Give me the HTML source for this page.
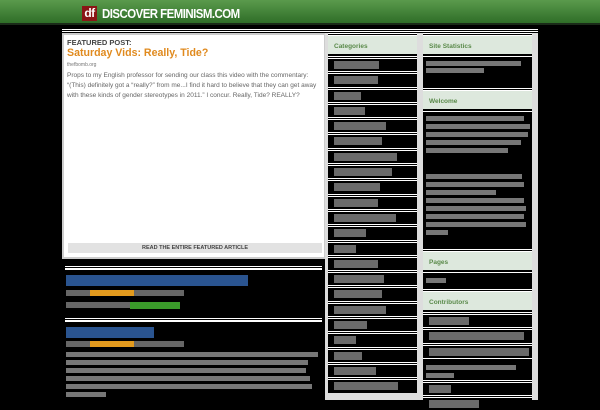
<!DOCTYPE html>
<html><head><meta charset="utf-8"><style>
*{margin:0;padding:0;box-sizing:border-box}
body{width:600px;height:400px;overflow:hidden;background:#000;font-family:"Liberation Sans",sans-serif;position:relative}
.hdr{position:absolute;left:0;top:0;width:600px;height:25px;background:linear-gradient(#5a9a4c,#2f6e28);border-bottom:2px solid #1a2a18}
.logo{position:absolute;left:82px;top:6px;width:15px;height:15px;background:#8a1616;color:#fff;font-weight:bold;font-size:12px;line-height:14px;text-align:center;letter-spacing:-0.5px}
.site{position:absolute;left:102px;top:6px;color:#fff;font-weight:bold;font-size:13px;letter-spacing:-0.6px;transform:scaleX(0.88);transform-origin:left}
.tl{position:absolute;left:62px;top:28px;width:476px;height:5px;background:linear-gradient(#000 0,#000 1px,#fff 1px,#fff 2px,#000 2px,#000 3px,#fff 3px,#fff 4px,#000 4px)}
.feat{position:absolute;left:62px;top:33px;width:264px;height:226px;background:#fff;border:2px solid #ccc}
.feat .fp{position:absolute;left:3px;top:3px;font-size:7.5px;font-weight:bold;color:#444}
.feat h1{position:absolute;left:3px;top:12px;font-size:10.6px;color:#e08a1e;font-weight:bold;white-space:nowrap}
.feat .src{position:absolute;left:3px;top:27px;font-size:5px;color:#777}
.feat p{position:absolute;left:3px;top:36px;width:254px;font-size:6.5px;line-height:10px;color:#666}
.feat .rd{position:absolute;left:4px;top:208px;width:254px;height:10px;background:#e2e2e2;font-size:5.5px;color:#444;text-align:center;line-height:10px;font-weight:bold}
.sep{position:absolute;left:65px;width:257px;height:5px;background:linear-gradient(#fff 0,#fff 1px,#000 1px,#000 2px,#fff 2px,#fff 4px,#000 4px)}
.blk{position:absolute;height:8px}
.side{position:absolute;left:325px;top:33px;width:213px;height:367px;background:#ddd}
.col{position:absolute;top:0}
.h{height:23px;background:linear-gradient(#fff 0,#fff 1px,#000 1px,#000 2px,#fff 2px,#fff 3px,#dde8dd 3px);color:#5a8a4a;font-size:6.5px;font-weight:bold;padding:10px 0 0 6px;border-bottom:2px solid #000;}
.it{height:15.3px;background:linear-gradient(#fff 0,#fff 1px,#000 1px,#000 2px,#fff 2px,#fff 3px,#000 3px);position:relative}
.it i{position:absolute;left:6px;top:5px;height:8px;background:#777;opacity:.9}
.box{background:#000;position:relative;border-top:1px solid #fff}
.box i{position:absolute;left:3px;height:5px;background:#777}
</style></head><body>
<div class="hdr"><div class="logo">df</div><div class="site">DISCOVER FEMINISM.COM</div></div>
<div class="tl"></div>
<div class="feat">
<div class="fp">FEATURED POST:</div>
<h1>Saturday Vids: Really, Tide?</h1>
<div class="src">thefbomb.org</div>
<p>Props to my English professor for sending our class this video with the commentary: “(This) definitely got a “really?” from me...I find it hard to believe that they can get away with these kinds of gender stereotypes in 2011.” I concur. Really, Tide? REALLY?</p>
<div class="rd">READ THE ENTIRE FEATURED ARTICLE</div>
</div>
<div class="sep" style="top:266px"></div>
<div class="blk" style="left:66px;top:275px;width:182px;height:11px;background:#2a5490"></div>
<div class="blk" style="left:66px;top:290px;width:118px;height:6px;background:#666"></div>
<div class="blk" style="left:90px;top:290px;width:44px;height:6px;background:#e29a1e"></div>
<div class="blk" style="left:66px;top:302px;width:64px;height:6px;background:#666"></div>
<div class="blk" style="left:130px;top:302px;width:50px;height:7px;background:#3a9a2a"></div>
<div class="sep" style="top:318px"></div>
<div class="blk" style="left:66px;top:327px;width:88px;height:11px;background:#2a5490"></div>
<div class="blk" style="left:66px;top:341px;width:118px;height:6px;background:#666"></div>
<div class="blk" style="left:90px;top:341px;width:44px;height:6px;background:#e29a1e"></div>
<div class="blk" style="left:66px;top:352px;width:252px;height:5px;background:#777"></div>
<div class="blk" style="left:66px;top:360px;width:242px;height:5px;background:#777"></div>
<div class="blk" style="left:66px;top:368px;width:240px;height:5px;background:#777"></div>
<div class="blk" style="left:66px;top:376px;width:244px;height:5px;background:#777"></div>
<div class="blk" style="left:66px;top:384px;width:246px;height:5px;background:#777"></div>
<div class="blk" style="left:66px;top:392px;width:40px;height:5px;background:#777"></div>
<div class="side">
<div class="col" style="left:3px;width:89px">
<div class="h">Categories</div>
<div class="it"><i style="width:45px"></i></div><div class="it"><i style="width:44px"></i></div><div class="it"><i style="width:27px"></i></div><div class="it"><i style="width:31px"></i></div><div class="it"><i style="width:52px"></i></div><div class="it"><i style="width:48px"></i></div><div class="it"><i style="width:63px"></i></div><div class="it"><i style="width:58px"></i></div><div class="it"><i style="width:46px"></i></div><div class="it"><i style="width:44px"></i></div><div class="it"><i style="width:62px"></i></div><div class="it"><i style="width:32px"></i></div><div class="it"><i style="width:22px"></i></div><div class="it"><i style="width:44px"></i></div><div class="it"><i style="width:50px"></i></div><div class="it"><i style="width:48px"></i></div><div class="it"><i style="width:52px"></i></div><div class="it"><i style="width:33px"></i></div><div class="it"><i style="width:22px"></i></div><div class="it"><i style="width:28px"></i></div><div class="it"><i style="width:42px"></i></div><div class="it"><i style="width:64px"></i></div>
</div>
<div class="col" style="left:98px;width:109px">
<div class="h">Site Statistics</div>
<div class="box" style="height:32px"><i style="top:4px;width:95px"></i><i style="top:11px;width:58px"></i></div>
<div class="h">Welcome</div>
<div class="box" style="height:138px"><i style="top:4px;width:98px"></i><i style="top:12px;width:104px"></i><i style="top:20px;width:102px"></i><i style="top:28px;width:95px"></i><i style="top:36px;width:82px"></i><i style="top:62px;width:96px"></i><i style="top:70px;width:98px"></i><i style="top:78px;width:70px"></i><i style="top:86px;width:98px"></i><i style="top:94px;width:100px"></i><i style="top:102px;width:98px"></i><i style="top:110px;width:100px"></i><i style="top:118px;width:22px"></i></div>
<div class="h">Pages</div>
<div class="box" style="height:17px"><i style="top:5px;width:20px"></i></div>
<div class="h">Contributors</div>
<div class="it"><i style="width:40px"></i></div><div class="it"><i style="width:95px"></i></div><div class="it"><i style="width:100px"></i></div><div class="box" style="height:22px"><i style="top:6px;width:90px"></i><i style="top:14px;width:28px"></i></div><div class="it"><i style="width:22px"></i></div><div class="it"><i style="width:50px"></i></div>
</div>
</div>
</body></html>
